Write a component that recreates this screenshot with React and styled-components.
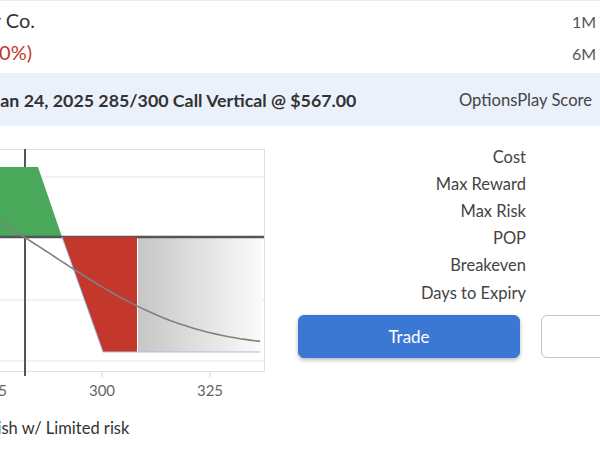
import React from 'react';
import styled, { createGlobalStyle } from 'styled-components';

const GlobalStyle = createGlobalStyle`
  html, body {
    margin: 0;
    padding: 0;
    background: #fff;
    overflow: hidden;
  }
  body {
    font-family: Lato, "Open Sans", sans-serif;
    color: #333;
  }
`;

// the view is a slice of a wider page, so the page starts left of the window
const Page = styled.div`
  width: 1000px;
  margin-left: -200px;
  border-top: 1px solid #ececec;
`;

const HeaderRow = styled.div`
  display: grid;
  grid-template-columns: 772px auto;
  align-items: baseline;
  height: 32px;
  line-height: 32px;
  padding-top: ${p => (p.$first ? '3px' : '0')};
`;

const Name = styled.div`
  width: 235px;
  box-sizing: border-box;
  padding-right: ${p => (p.$down ? '3px' : '0')};
  text-align: right;
  font-size: 20px;
  color: ${p => (p.$down ? '#c0392b' : '#333')};
  white-space: nowrap;
`;

const Trend = styled.div`
  font-size: 16px;
  color: #555;
  white-space: nowrap;
`;

const Band = styled.div`
  margin-top: 5px;
  height: 53px;
  background: #ebf1fb;
  display: grid;
  grid-template-columns: 466px auto;
  align-items: center;
  padding-left: 193px;
`;

const Title = styled.div`
  font-size: 17.8px;
  font-weight: 700;
  color: #333;
  white-space: nowrap;
`;

const Score = styled.div`
  display: flex;
  gap: 24px;
  font-size: 16.6px;
  color: #444;
  white-space: nowrap;
`;

const ScoreValue = styled.span`
  font-weight: 700;
  color: #2f8f46;
`;

const Body = styled.div`
  display: grid;
  grid-template-columns: 465px 1fr;
  column-gap: 33px;
  padding-top: 16px;
`;

const ChartCol = styled.div`
  padding-top: 7px;
`;

const Strategy = styled.div`
  padding-left: 164px;
  margin-top: 8px;
  font-size: 16.5px;
  line-height: 24px;
  color: #333;
  white-space: nowrap;
`;

const Stats = styled.div`
  display: grid;
  grid-template-columns: 228px auto;
  column-gap: 100px;
  margin-top: 1.5px;
`;

const StatLabel = styled.div`
  text-align: right;
  font-size: 16.5px;
  line-height: 27.2px;
  color: #444;
`;

const StatValue = styled.div`
  font-size: 16.5px;
  line-height: 27.2px;
  font-weight: 700;
`;

const Buttons = styled.div`
  display: grid;
  grid-template-columns: 222px 222px;
  column-gap: 21px;
  margin-top: 8.5px;
`;

const Button = styled.button`
  height: 43px;
  border-radius: 6px;
  font-family: inherit;
  font-size: 17px;
  cursor: pointer;
  border: 1px solid ${p => (p.$primary ? '#3a78d3' : '#b9c6d4')};
  background: ${p => (p.$primary ? '#3a78d3' : '#fff')};
  color: ${p => (p.$primary ? '#fff' : '#3a78d3')};
  box-shadow: ${p => (p.$primary ? '0 2px 4px rgba(0,0,0,0.28)' : 'none')};
`;

const erf = x => {
  const s = x < 0 ? -1 : 1;
  const a = Math.abs(x);
  const t = 1 / (1 + 0.3275911 * a);
  const y = 1 - ((((1.061405429 * t - 1.453152027) * t + 1.421413741) * t - 0.284496736) * t + 0.254829592) * t * Math.exp(-a * a);
  return s * y;
};
const cdf = z => 0.5 * (1 + erf(z / Math.SQRT2));

const curve = () => {
  const pts = [];
  for (let x = 40; x <= 460; x += 5) {
    const y = 18 + 180 * cdf((x - 255) / 110);
    pts.push(`${x},${y.toFixed(1)}`);
  }
  return pts.join(' ');
};

const Chart = () => (
  <svg width="465" height="256" viewBox="0 0 465 256">
    <defs>
      <linearGradient id="loss" x1="0" x2="1" y1="0" y2="0">
        <stop offset="0" stopColor="#c6c6c6" />
        <stop offset="1" stopColor="#fbfbfb" />
      </linearGradient>
    </defs>
    <rect x="0.5" y="0.5" width="464" height="222" fill="#fff" stroke="#d6e2ea" />
    <line x1="0" x2="464" y1="28" y2="28" stroke="#e3e6ea" />
    <line x1="0" x2="464" y1="151" y2="151" stroke="#e3e6ea" />
    <line x1="0" x2="464" y1="212" y2="212" stroke="#e3e6ea" />
    {[194, 302, 410].map(x => (
      <line key={x} x1={x} x2={x} y1="222" y2="228" stroke="#ccd6dd" />
    ))}
    <rect x="338" y="89" width="124" height="114" fill="url(#loss)" />
    <line x1="225" x2="225" y1="0" y2="227" stroke="#555" strokeWidth="2" />
    <polygon points="0,18 238,18 262,88 0,88" fill="#4aa85a" />
    <line x1="0" x2="464" y1="88" y2="88" stroke="#555" strokeWidth="2.5" />
    <polygon points="262,88 337,88 337,203 303,203" fill="#c3372d" />
    <polyline points="262,88 303,203 460,203" fill="none" stroke="#9cc3e8" strokeWidth="1" />
    <polyline points={curve()} fill="none" stroke="#808080" strokeWidth="1.6" />
    <g fontFamily="Lato, sans-serif" fontSize="15" fill="#666" textAnchor="middle">
      <text x="194" y="247">275</text>
      <text x="302" y="247">300</text>
      <text x="410" y="247">325</text>
    </g>
  </svg>
);

const stats = [
  ['Cost', '-$3.25'],
  ['Max Reward', '$325'],
  ['Max Risk', '$1,175'],
  ['POP', '62%'],
  ['Breakeven', '$288.25'],
  ['Days to Expiry', '17'],
];

const App = () => (
  <>
    <GlobalStyle />
    <Page>
      <HeaderRow $first>
        <Name>The Hershey Co.</Name>
        <Trend>1M Trend</Trend>
      </HeaderRow>
      <HeaderRow>
        <Name $down>$567.00 -6.88 (-1.20%)</Name>
        <Trend>6M Trend</Trend>
      </HeaderRow>
      <Band>
        <Title>Jan 24, 2025 285/300 Call Vertical @ $567.00</Title>
        <Score>
          OptionsPlay Score
          <ScoreValue>72</ScoreValue>
        </Score>
      </Band>
      <Body>
        <ChartCol>
          <Chart />
          <Strategy>Bearish w/ Limited risk</Strategy>
        </ChartCol>
        <div>
          <Stats>
            {stats.map(([label, value]) => (
              <React.Fragment key={label}>
                <StatLabel>{label}</StatLabel>
                <StatValue>{value}</StatValue>
              </React.Fragment>
            ))}
          </Stats>
          <Buttons>
            <Button $primary>Trade</Button>
            <Button>Save</Button>
          </Buttons>
        </div>
      </Body>
    </Page>
  </>
);

export default App;
